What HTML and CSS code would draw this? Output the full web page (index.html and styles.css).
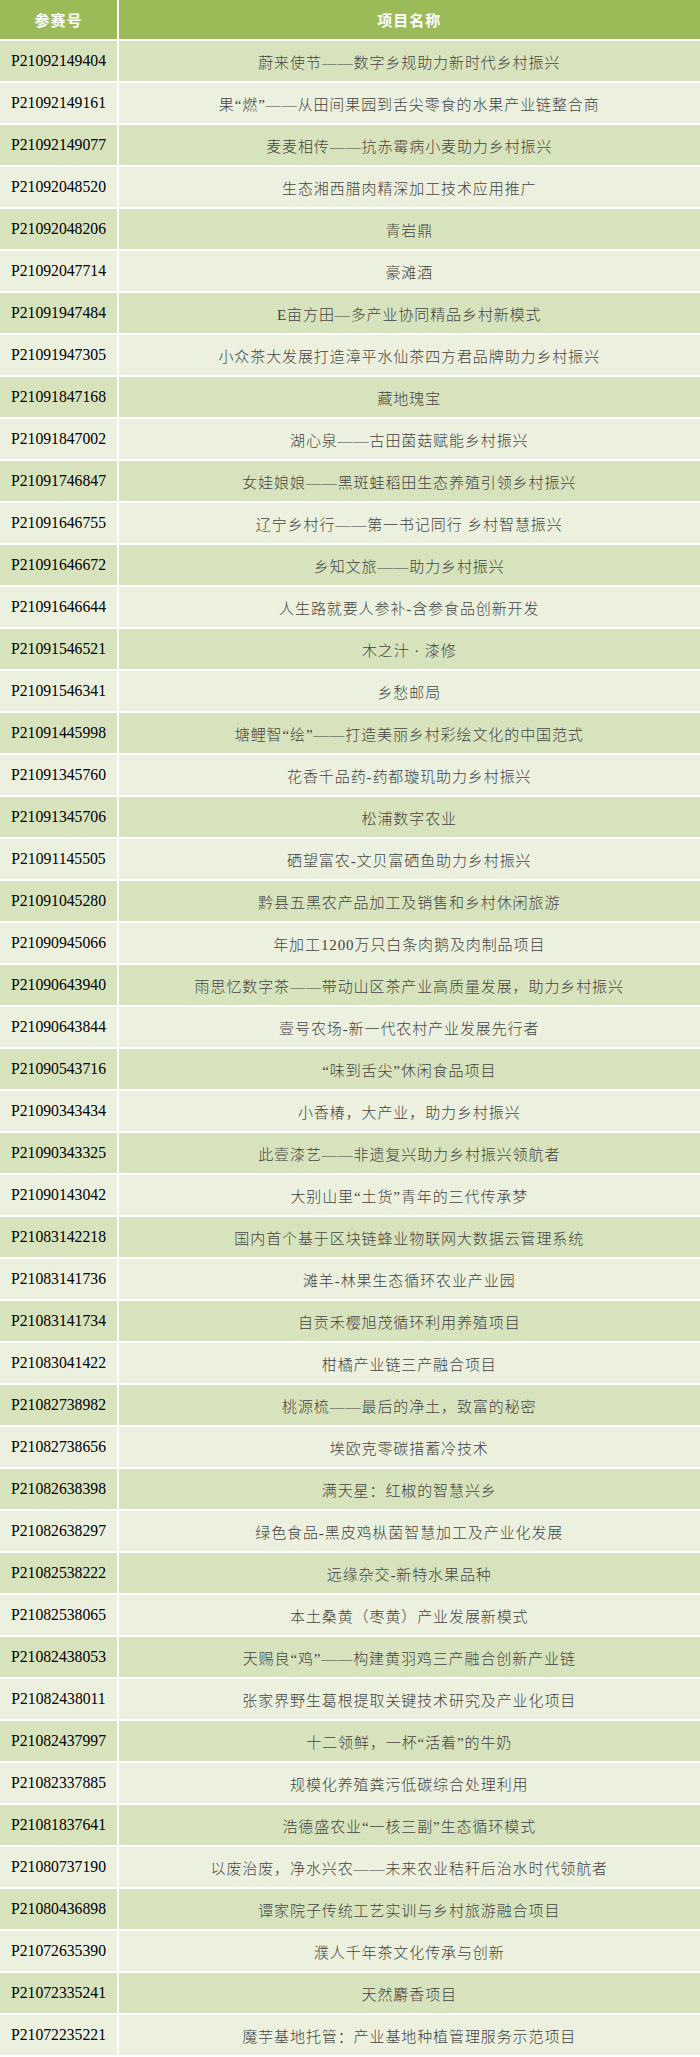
FILE: index.html
```html
<!DOCTYPE html>
<html lang="zh-CN">
<head>
<meta charset="utf-8">
<title>项目名单</title>
<link rel="stylesheet" href="styles.css">
</head>
<body>
<div class="table">
  <div class="row head"><div class="cell id">参赛号</div><div class="cell name">项目名称</div></div>
  <div class="row odd"><div class="cell id">P21092149404</div><div class="cell name">蔚来使节——数字乡规助力新时代乡村振兴</div></div>
  <div class="row even"><div class="cell id">P21092149161</div><div class="cell name">果“燃”——从田间果园到舌尖零食的水果产业链整合商</div></div>
  <div class="row odd"><div class="cell id">P21092149077</div><div class="cell name">麦麦相传——抗赤霉病小麦助力乡村振兴</div></div>
  <div class="row even"><div class="cell id">P21092048520</div><div class="cell name">生态湘西腊肉精深加工技术应用推广</div></div>
  <div class="row odd"><div class="cell id">P21092048206</div><div class="cell name">青岩鼎</div></div>
  <div class="row even"><div class="cell id">P21092047714</div><div class="cell name">豪滩酒</div></div>
  <div class="row odd"><div class="cell id">P21091947484</div><div class="cell name">E亩方田—多产业协同精品乡村新模式</div></div>
  <div class="row even"><div class="cell id">P21091947305</div><div class="cell name">小众茶大发展打造漳平水仙茶四方君品牌助力乡村振兴</div></div>
  <div class="row odd"><div class="cell id">P21091847168</div><div class="cell name">藏地瑰宝</div></div>
  <div class="row even"><div class="cell id">P21091847002</div><div class="cell name">湖心泉——古田菌菇赋能乡村振兴</div></div>
  <div class="row odd"><div class="cell id">P21091746847</div><div class="cell name">女娃娘娘——黑斑蛙稻田生态养殖引领乡村振兴</div></div>
  <div class="row even"><div class="cell id">P21091646755</div><div class="cell name">辽宁乡村行——第一书记同行 乡村智慧振兴</div></div>
  <div class="row odd"><div class="cell id">P21091646672</div><div class="cell name">乡知文旅——助力乡村振兴</div></div>
  <div class="row even"><div class="cell id">P21091646644</div><div class="cell name">人生路就要人参补-含参食品创新开发</div></div>
  <div class="row odd"><div class="cell id">P21091546521</div><div class="cell name">木之汁 · 漆修</div></div>
  <div class="row even"><div class="cell id">P21091546341</div><div class="cell name">乡愁邮局</div></div>
  <div class="row odd"><div class="cell id">P21091445998</div><div class="cell name">塘鲤智“绘”——打造美丽乡村彩绘文化的中国范式</div></div>
  <div class="row even"><div class="cell id">P21091345760</div><div class="cell name">花香千品药-药都璇玑助力乡村振兴</div></div>
  <div class="row odd"><div class="cell id">P21091345706</div><div class="cell name">松浦数字农业</div></div>
  <div class="row even"><div class="cell id">P21091145505</div><div class="cell name">硒望富农-文贝富硒鱼助力乡村振兴</div></div>
  <div class="row odd"><div class="cell id">P21091045280</div><div class="cell name">黔县五黑农产品加工及销售和乡村休闲旅游</div></div>
  <div class="row even"><div class="cell id">P21090945066</div><div class="cell name">年加工1200万只白条肉鹅及肉制品项目</div></div>
  <div class="row odd"><div class="cell id">P21090643940</div><div class="cell name">雨思忆数字茶——带动山区茶产业高质量发展，助力乡村振兴</div></div>
  <div class="row even"><div class="cell id">P21090643844</div><div class="cell name">壹号农场-新一代农村产业发展先行者</div></div>
  <div class="row odd"><div class="cell id">P21090543716</div><div class="cell name">“味到舌尖”休闲食品项目</div></div>
  <div class="row even"><div class="cell id">P21090343434</div><div class="cell name">小香椿，大产业，助力乡村振兴</div></div>
  <div class="row odd"><div class="cell id">P21090343325</div><div class="cell name">此壹漆艺——非遗复兴助力乡村振兴领航者</div></div>
  <div class="row even"><div class="cell id">P21090143042</div><div class="cell name">大别山里“土货”青年的三代传承梦</div></div>
  <div class="row odd"><div class="cell id">P21083142218</div><div class="cell name">国内首个基于区块链蜂业物联网大数据云管理系统</div></div>
  <div class="row even"><div class="cell id">P21083141736</div><div class="cell name">滩羊-林果生态循环农业产业园</div></div>
  <div class="row odd"><div class="cell id">P21083141734</div><div class="cell name">自贡禾樱旭茂循环利用养殖项目</div></div>
  <div class="row even"><div class="cell id">P21083041422</div><div class="cell name">柑橘产业链三产融合项目</div></div>
  <div class="row odd"><div class="cell id">P21082738982</div><div class="cell name">桃源梳——最后的净土，致富的秘密</div></div>
  <div class="row even"><div class="cell id">P21082738656</div><div class="cell name">埃欧克零碳措蓄冷技术</div></div>
  <div class="row odd"><div class="cell id">P21082638398</div><div class="cell name">满天星：红椒的智慧兴乡</div></div>
  <div class="row even"><div class="cell id">P21082638297</div><div class="cell name">绿色食品-黑皮鸡枞菌智慧加工及产业化发展</div></div>
  <div class="row odd"><div class="cell id">P21082538222</div><div class="cell name">远缘杂交-新特水果品种</div></div>
  <div class="row even"><div class="cell id">P21082538065</div><div class="cell name">本土桑黄（枣黄）产业发展新模式</div></div>
  <div class="row odd"><div class="cell id">P21082438053</div><div class="cell name">天赐良“鸡”——构建黄羽鸡三产融合创新产业链</div></div>
  <div class="row even"><div class="cell id">P21082438011</div><div class="cell name">张家界野生葛根提取关键技术研究及产业化项目</div></div>
  <div class="row odd"><div class="cell id">P21082437997</div><div class="cell name">十二领鲜，一杯“活着”的牛奶</div></div>
  <div class="row even"><div class="cell id">P21082337885</div><div class="cell name">规模化养殖粪污低碳综合处理利用</div></div>
  <div class="row odd"><div class="cell id">P21081837641</div><div class="cell name">浩德盛农业“一核三副”生态循环模式</div></div>
  <div class="row even"><div class="cell id">P21080737190</div><div class="cell name">以废治废，净水兴农——未来农业秸秆后治水时代领航者</div></div>
  <div class="row odd"><div class="cell id">P21080436898</div><div class="cell name">谭家院子传统工艺实训与乡村旅游融合项目</div></div>
  <div class="row even"><div class="cell id">P21072635390</div><div class="cell name">濮人千年茶文化传承与创新</div></div>
  <div class="row odd"><div class="cell id">P21072335241</div><div class="cell name">天然麝香项目</div></div>
  <div class="row even"><div class="cell id">P21072235221</div><div class="cell name">魔芋基地托管：产业基地种植管理服务示范项目</div></div>
</div>
</body>
</html>
```

FILE: styles.css
```css
html, body {
  margin: 0;
  padding: 0;
  background: #ffffff;
}

.table {
  width: 700px;
  display: flex;
  flex-direction: column;
  gap: 2px;
  padding-bottom: 2px;
}

.row {
  display: grid;
  grid-template-columns: 117px 1fr;
  column-gap: 1.5px;
  height: 40px;
}

.row.head {
  height: 39px;
}

.cell {
  display: flex;
  align-items: center;
  justify-content: center;
  white-space: nowrap;
}

.head .cell {
  background: #9bbb59;
  color: #ffffff;
  font-family: "Noto Sans CJK SC", sans-serif;
  font-weight: 700;
  font-size: 15px;
  letter-spacing: 1px;
}

.odd .cell {
  background: #d7e3bc;
}

.even .cell {
  background: #ebf1de;
}

.row:not(.head) .id {
  font-family: "Liberation Serif", serif;
  font-size: 15.7px;
  color: #000000;
}

.row:not(.head) .name {
  font-family: "Liberation Serif", "Noto Sans CJK SC", serif;
  font-size: 15px;
  font-weight: 300;
  letter-spacing: 0.9px;
  color: #444444;
}
```
